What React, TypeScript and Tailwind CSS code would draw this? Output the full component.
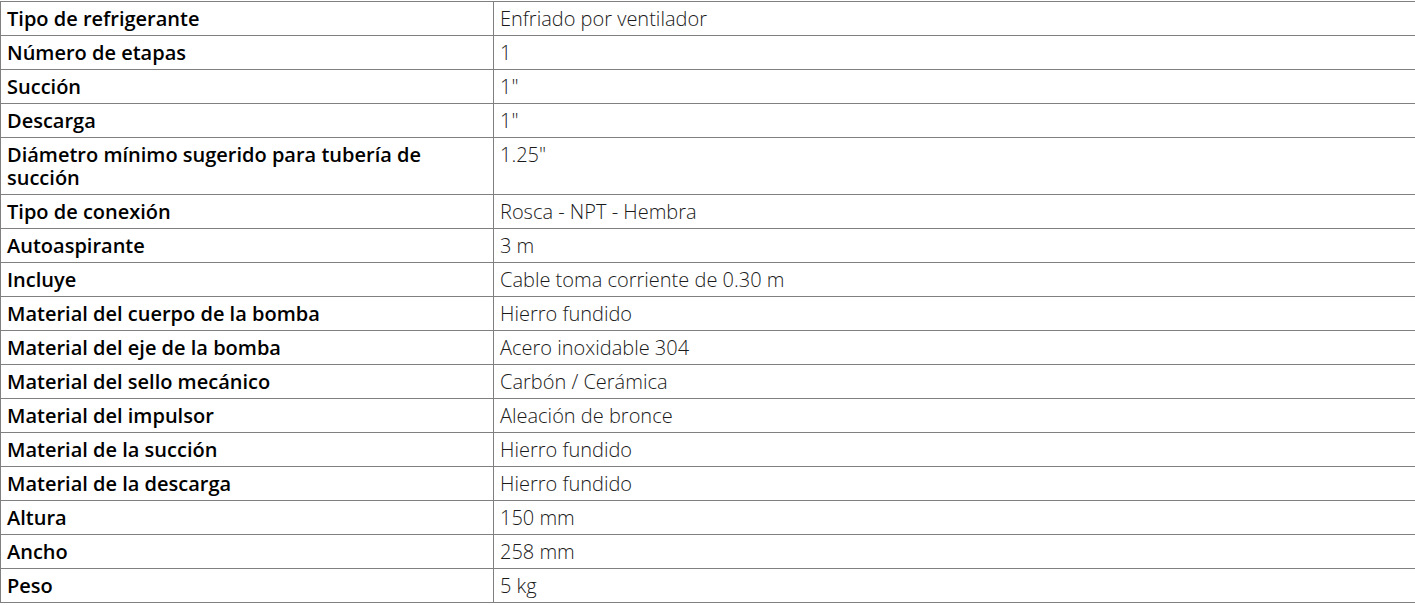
const specs: [string, string][] = [
  ["Tipo de refrigerante", "Enfriado por ventilador"],
  ["Número de etapas", "1"],
  ["Succión", '1"'],
  ["Descarga", '1"'],
  ["Diámetro mínimo sugerido para tubería de succión", '1.25"'],
  ["Tipo de conexión", "Rosca - NPT - Hembra"],
  ["Autoaspirante", "3 m"],
  ["Incluye", "Cable toma corriente de 0.30 m"],
  ["Material del cuerpo de la bomba", "Hierro fundido"],
  ["Material del eje de la bomba", "Acero inoxidable 304"],
  ["Material del sello mecánico", "Carbón / Cerámica"],
  ["Material del impulsor", "Aleación de bronce"],
  ["Material de la succión", "Hierro fundido"],
  ["Material de la descarga", "Hierro fundido"],
  ["Altura", "150 mm"],
  ["Ancho", "258 mm"],
  ["Peso", "5 kg"],
];

export default function App() {
  return (
    <div className="w-[1415px] h-[605px] overflow-hidden bg-white pt-px">
      <table className="w-[1420px] border-collapse font-['Open_Sans',sans-serif] text-[20px] leading-[23px]">
        <tbody>
          {specs.map(([label, value]) => (
            <tr key={label}>
              <td className="w-[493px] border border-[#808080] pl-[6px] pr-16 py-[5px] align-top font-semibold text-black">
                {label}
              </td>
              <td className="border border-[#808080] pl-[6px] py-[5px] align-top font-light text-[#1a1a1a]">
                {value}
              </td>
            </tr>
          ))}
        </tbody>
      </table>
    </div>
  );
}
